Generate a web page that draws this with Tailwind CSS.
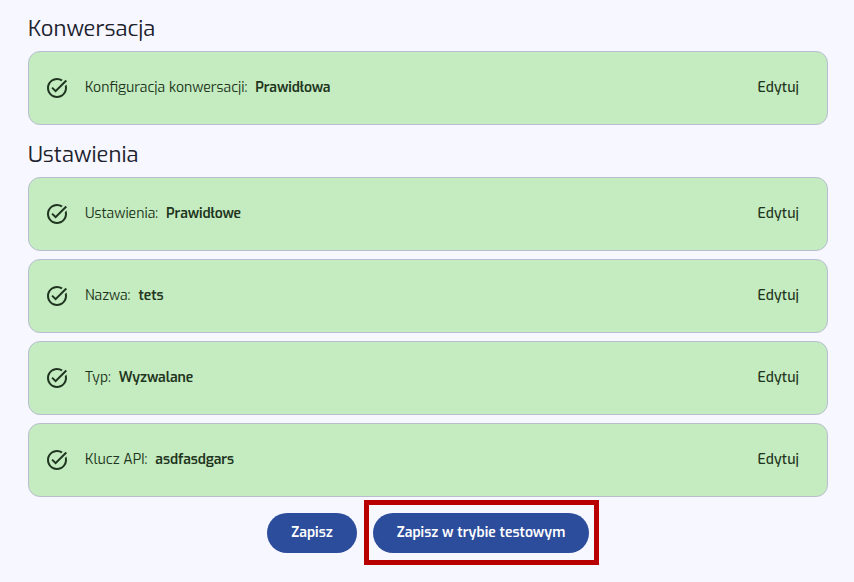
<!DOCTYPE html>
<html lang="pl">
<head>
  <meta charset="UTF-8">
  <meta name="viewport" content="width=device-width, initial-scale=1.0">
  <title>Podsumowanie</title>
  <script src="https://cdn.jsdelivr.net/npm/@tailwindcss/browser@4"></script>
</head>
<body class="bg-[#f7f7ff] h-[582px] overflow-hidden font-[Exo,'Exo_2',Roboto,sans-serif] text-sm text-[#1f3520]">
  <!-- Icon shared by all rows -->
  <svg class="hidden">
    <symbol id="task-alt" viewBox="0 0 24 24">
      <path d="M22 5.18 10.59 16.6l-4.24-4.24 1.41-1.41 2.83 2.83 10-10L22 5.18zM19.79 10.22c.13.57.21 1.17.21 1.78 0 4.42-3.58 8-8 8s-8-3.58-8-8 3.58-8 8-8c1.58 0 3.04.46 4.28 1.25l1.44-1.44A9.9 9.9 0 0 0 12 2C6.48 2 2 6.48 2 12s4.48 10 10 10 10-4.48 10-10c0-1.19-.22-2.33-.6-3.39l-1.61 1.61z"/>
    </symbol>
  </svg>

  <main class="pl-7 pr-[26px] pt-[15px]">
    <!-- Konwersacja -->
    <h2 class="h-9 text-[22px] leading-7 text-[#20222e]">Konwersacja</h2>
    <div class="flex h-[74px] items-center rounded-xl border border-[#b9bdd0] bg-[#c4ecc0] pl-4 pr-7">
      <svg class="size-6 fill-[#1f3520]"><use href="#task-alt"/></svg>
      <p class="ml-4 flex gap-2"><span>Konfiguracja konwersacji:</span><span class="font-semibold tracking-[-0.08px]">Prawidłowa</span></p>
      <button class="ml-auto font-medium tracking-[0.1px]">Edytuj</button>
    </div>

    <!-- Ustawienia -->
    <h2 class="mt-4 h-9 text-[22px] leading-7 text-[#20222e]">Ustawienia</h2>
    <div class="space-y-2">
      <div class="flex h-[74px] items-center rounded-xl border border-[#b9bdd0] bg-[#c4ecc0] pl-4 pr-7">
        <svg class="size-6 fill-[#1f3520]"><use href="#task-alt"/></svg>
        <p class="ml-4 flex gap-2"><span>Ustawienia:</span><span class="font-semibold tracking-[-0.08px]">Prawidłowe</span></p>
        <button class="ml-auto font-medium tracking-[0.1px]">Edytuj</button>
      </div>
      <div class="flex h-[74px] items-center rounded-xl border border-[#b9bdd0] bg-[#c4ecc0] pl-4 pr-7">
        <svg class="size-6 fill-[#1f3520]"><use href="#task-alt"/></svg>
        <p class="ml-4 flex gap-2"><span>Nazwa:</span><span class="font-semibold tracking-[-0.08px]">tets</span></p>
        <button class="ml-auto font-medium tracking-[0.1px]">Edytuj</button>
      </div>
      <div class="flex h-[74px] items-center rounded-xl border border-[#b9bdd0] bg-[#c4ecc0] pl-4 pr-7">
        <svg class="size-6 fill-[#1f3520]"><use href="#task-alt"/></svg>
        <p class="ml-4 flex gap-2"><span>Typ:</span><span class="font-semibold tracking-[-0.08px]">Wyzwalane</span></p>
        <button class="ml-auto font-medium tracking-[0.1px]">Edytuj</button>
      </div>
      <div class="flex h-[74px] items-center rounded-xl border border-[#b9bdd0] bg-[#c4ecc0] pl-4 pr-7">
        <svg class="size-6 fill-[#1f3520]"><use href="#task-alt"/></svg>
        <p class="ml-4 flex gap-2"><span>Klucz API:</span><span class="font-semibold tracking-[-0.08px]">asdfasdgars</span></p>
        <button class="ml-auto font-medium tracking-[0.1px]">Edytuj</button>
      </div>
    </div>

    <!-- Buttons -->
    <div class="mt-4 flex justify-center gap-4 font-semibold tracking-[0.05px] text-white">
      <button class="h-10 w-[90px] rounded-full bg-[#2c4c9c]">Zapisz</button>
      <div class="relative">
        <button class="h-10 w-[216px] rounded-full bg-[#2c4c9c]">Zapisz w trybie testowym</button>
        <div class="pointer-events-none absolute -top-[13px] -left-[9px] h-[65px] w-[235px] border-5 border-[#b80000]"></div>
      </div>
    </div>
  </main>
</body>
</html>
